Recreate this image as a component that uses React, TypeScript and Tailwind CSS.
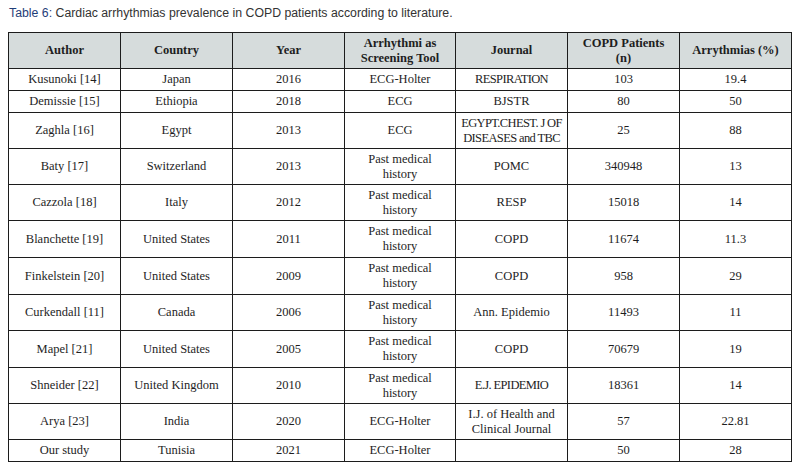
import React from 'react';

type Row = {
  author: string;
  country: string;
  year: string;
  tool: string[];
  journal: string[];
  patients: string;
  arr: string;
  h: string;
};

// Row heights include the bottom border
const rows: Row[] = [
  { author: 'Kusunoki [14]', country: 'Japan', year: '2016', tool: ['ECG-Holter'], journal: ['RESPIRATION'], patients: '103', arr: '19.4', h: 'h-[22px]' },
  { author: 'Demissie [15]', country: 'Ethiopia', year: '2018', tool: ['ECG'], journal: ['BJSTR'], patients: '80', arr: '50', h: 'h-[22px]' },
  { author: 'Zaghla [16]', country: 'Egypt', year: '2013', tool: ['ECG'], journal: ['EGYPT.CHEST. J OF', 'DISEASES and TBC'], patients: '25', arr: '88', h: 'h-[36px]' },
  { author: 'Baty [17]', country: 'Switzerland', year: '2013', tool: ['Past medical', 'history'], journal: ['POMC'], patients: '340948', arr: '13', h: 'h-[36px]' },
  { author: 'Cazzola [18]', country: 'Italy', year: '2012', tool: ['Past medical', 'history'], journal: ['RESP'], patients: '15018', arr: '14', h: 'h-[36px]' },
  { author: 'Blanchette [19]', country: 'United States', year: '2011', tool: ['Past medical', 'history'], journal: ['COPD'], patients: '11674', arr: '11.3', h: 'h-[37px]' },
  { author: 'Finkelstein [20]', country: 'United States', year: '2009', tool: ['Past medical', 'history'], journal: ['COPD'], patients: '958', arr: '29', h: 'h-[37px]' },
  { author: 'Curkendall [11]', country: 'Canada', year: '2006', tool: ['Past medical', 'history'], journal: ['Ann. Epidemio'], patients: '11493', arr: '11', h: 'h-[36px]' },
  { author: 'Mapel [21]', country: 'United States', year: '2005', tool: ['Past medical', 'history'], journal: ['COPD'], patients: '70679', arr: '19', h: 'h-[37px]' },
  { author: 'Shneider [22]', country: 'United Kingdom', year: '2010', tool: ['Past medical', 'history'], journal: ['E.J. EPIDEMIO'], patients: '18361', arr: '14', h: 'h-[36px]' },
  { author: 'Arya [23]', country: 'India', year: '2020', tool: ['ECG-Holter'], journal: ['I.J. of Health and', 'Clinical Journal'], patients: '57', arr: '22.81', h: 'h-[36px]' },
  { author: 'Our study', country: 'Tunisia', year: '2021', tool: ['ECG-Holter'], journal: [], patients: '50', arr: '28', h: 'h-[22px]' },
];

// mostly-capital strings get tightened, the source font has narrow caps
const isCaps = (s: string) => s.replace(/[^A-Za-z]/g, '').replace(/[a-z]/g, '').length > 6;

const Cell = ({ lines, h, head }: { lines: string[]; h: string; head?: boolean }) => (
  <div
    className={`${h} flex flex-col items-center justify-center border-r border-b border-[#1c1c1c] text-center leading-[15px] ${
      head ? 'bg-[#d6dcdc] font-bold' : ''
    }`}
  >
    {lines.map((l, i) => (
      <span key={i} className={`whitespace-nowrap ${isCaps(l) ? 'tracking-[-0.05em]' : ''}`}>
        {l}
      </span>
    ))}
  </div>
);

export default function App() {
  const header = [
    ['Author'],
    ['Country'],
    ['Year'],
    ['Arrhythmi as', 'Screening Tool'],
    ['Journal'],
    ['COPD Patients', '(n)'],
    ['Arrythmias (%)'],
  ];

  return (
    <div className="w-[801px] h-[465px] bg-white pt-[5px]">
      <p className="pl-[9px] text-[12.3px] leading-[16px] text-[#333] font-['Liberation_Sans',Arial,sans-serif]">
        <span className="text-[#1f3d78]">Table 6:</span> Cardiac arrhythmias prevalence in COPD patients according to literature.
      </p>

      <div className="ml-2 mt-[11px] grid w-[784px] grid-cols-[112px_112px_112px_111px_112px_112px_112px] border-t border-l border-[#1c1c1c] text-[12.5px] text-[#1e1e1e] font-['Liberation_Serif','Times_New_Roman',serif]">
        {header.map((lines, i) => (
          <Cell key={i} lines={lines} h="h-[36px]" head />
        ))}
        {rows.map((r) => (
          <React.Fragment key={r.author}>
            <Cell lines={[r.author]} h={r.h} />
            <Cell lines={[r.country]} h={r.h} />
            <Cell lines={[r.year]} h={r.h} />
            <Cell lines={r.tool} h={r.h} />
            <Cell lines={r.journal} h={r.h} />
            <Cell lines={[r.patients]} h={r.h} />
            <Cell lines={[r.arr]} h={r.h} />
          </React.Fragment>
        ))}
      </div>
    </div>
  );
}
